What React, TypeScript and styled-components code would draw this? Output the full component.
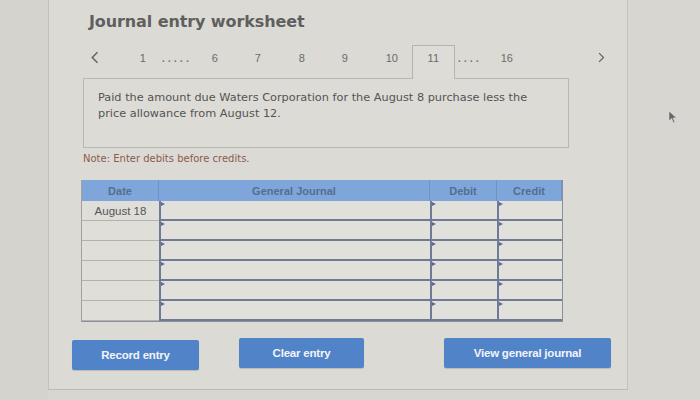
import React from "react"
import styled, { createGlobalStyle } from "styled-components"

const GlobalStyle = createGlobalStyle`
  html, body {
    margin: 0;
    padding: 0;
    background: #d6d4cf;
    font-family: "Liberation Sans", Arial, sans-serif;
  }
`

const Screen = styled.div`
  position: relative;
  width: 700px;
  height: 400px;
  overflow: hidden;
  display: flex;
  background: #d8d6d1;
`

const Gutter = styled.div`
  width: 48px;
  flex-shrink: 0;
  background: #d5d3ce;
`

const Panel = styled.div`
  width: 580px;
  height: 390px;
  box-sizing: border-box;
  background: #dcdad5;
  border-left: 1px solid #c4c2bd;
  border-right: 1px solid #c4c2bd;
  border-bottom: 1px solid #bdbbb6;
  padding: 12px 0 0 32px;
  display: flex;
  flex-direction: column;
`

const Title = styled.h1`
  margin: 0 0 14px 8px;
  height: 19px;
  line-height: 19px;
  font-family: "DejaVu Sans", Verdana, sans-serif;
  font-weight: bold;
  font-size: 16px;
  color: #5f5f5f;
  letter-spacing: -0.1px;
`

const Pager = styled.div`
  display: flex;
  align-items: flex-start;
  height: 33px;
  margin-left: 10px;
  width: 514px;
  font-size: 11px;
  color: #6a6a6a;
`

interface PageProps {
  width: number
  active?: boolean
}

const Page = styled.div<PageProps>`
  width: ${(p) => p.width}px;
  height: 34px;
  box-sizing: border-box;
  display: flex;
  justify-content: center;
  padding-top: 5px;
  line-height: 14px;
  border: 1px solid ${(p) => (p.active ? "#b5b3ae" : "transparent")};
  border-bottom: none;
  background: ${(p) => (p.active ? "#dedcd7" : "transparent")};
  position: relative;
  z-index: 1;
`

const Dots = styled.span`
  letter-spacing: 3px;
  font-weight: bold;
  color: #7a7a7a;
`

const Arrow = styled.div`
  height: 24px;
  display: flex;
  align-items: center;
`

const Spacer = styled.div`
  flex: 1;
`

const Prompt = styled.div`
  width: 486px;
  height: 70px;
  box-sizing: border-box;
  margin-left: 2px;
  border: 1px solid #b9b7b2;
  background: #dddbd6;
  padding: 11px 14px;
  font-family: "DejaVu Sans", Verdana, sans-serif;
  font-size: 11.3px;
  line-height: 16px;
  color: #545454;
`

const Note = styled.div`
  margin: 5px 0 15px 2px;
  height: 12px;
  line-height: 12px;
  font-family: "DejaVu Sans", Verdana, sans-serif;
  font-size: 10px;
  color: #8c5a4c;
`

const Table = styled.div`
  width: 480px;
  display: grid;
  grid-template-columns: 77px 271px 67px 65px;
  border-left: 1px solid #a3a19c;
  border-right: 1px solid #8890a0;
  border-bottom: 1px solid #8890a0;
`

const HeadCell = styled.div`
  height: 21px;
  background: #7ea6da;
  border-right: 1px solid #6f93c6;
  display: flex;
  align-items: center;
  justify-content: center;
  font-weight: bold;
  font-size: 11px;
  color: #566d90;
  &:last-child {
    border-right: none;
  }
`

const DateCell = styled.div`
  height: 20px;
  box-sizing: border-box;
  border-bottom: 1px solid #b3b1ac;
  display: flex;
  align-items: center;
  justify-content: center;
  font-size: 11.5px;
  color: #555;
  background: #e0ded9;
`

const InputCell = styled.div`
  position: relative;
  height: 20px;
  box-sizing: border-box;
  border-left: 2px solid #6f7b96;
  border-bottom: 2px solid #6f7b96;
  background: #e2e0db;
  &::before {
    content: "";
    position: absolute;
    left: 0;
    top: 1px;
    border-left: 4px solid #5a6a92;
    border-top: 2px solid transparent;
    border-bottom: 2px solid transparent;
  }
`

const Buttons = styled.div`
  display: flex;
  align-items: flex-start;
  margin-top: 16px;
  width: 550px;
  margin-left: -9px;
`

interface ButtonProps {
  width: number
  offset?: number
}

const Button = styled.button<ButtonProps>`
  width: ${(p) => p.width}px;
  height: 30px;
  margin-top: ${(p) => p.offset ?? 0}px;
  border: none;
  border-radius: 2px;
  background: #5183c8;
  color: #f2f4f8;
  font-family: "Liberation Sans", Arial, sans-serif;
  font-weight: bold;
  font-size: 11.5px;
  letter-spacing: -0.2px;
  box-shadow: 0 1px 1px rgba(0, 0, 0, 0.15);
`

const Gap = styled.div<{ width: number }>`
  flex-shrink: 0;
  width: ${(p) => p.width}px;
`

const Cursor = styled.svg`
  position: absolute;
  left: 668px;
  top: 110px;
`

const Chevron: React.FC<{ dir: "left" | "right"; size: number }> = ({ dir, size }) => (
  <svg width={size * 0.6} height={size} viewBox="0 0 6 10">
    <path
      d={dir === "left" ? "M5 1 L1 5 L5 9" : "M1 1 L5 5 L1 9"}
      fill="none"
      stroke="#666"
      strokeWidth="1.2"
    />
  </svg>
)

const pages: { label: React.ReactNode; width: number; active?: boolean }[] = [
  { label: "1", width: 22 },
  { label: <Dots>.....</Dots>, width: 46 },
  { label: "6", width: 30 },
  { label: "7", width: 56 },
  { label: "8", width: 32 },
  { label: "9", width: 54 },
  { label: "10", width: 40 },
  { label: "11", width: 43, active: true },
  { label: <Dots>....</Dots>, width: 30 },
  { label: "16", width: 44 },
]

const rows = ["August 18", "", "", "", "", ""]

export default function App() {
  return (
    <>
      <GlobalStyle />
      <Screen>
        <Gutter />
        <Panel>
          <Title>Journal entry worksheet</Title>
          <Pager>
            <Arrow>
              <Chevron dir="left" size={13} />
            </Arrow>
            <Gap width={33} />
            {pages.map((p, i) => (
              <Page key={i} width={p.width} active={p.active}>
                {p.label}
              </Page>
            ))}
            <Spacer />
            <Arrow>
              <Chevron dir="right" size={11} />
            </Arrow>
          </Pager>
          <Prompt>
            Paid the amount due Waters Corporation for the August 8 purchase less the price
            allowance from August 12.
          </Prompt>
          <Note>Note: Enter debits before credits.</Note>
          <Table>
            <HeadCell>Date</HeadCell>
            <HeadCell>General Journal</HeadCell>
            <HeadCell>Debit</HeadCell>
            <HeadCell>Credit</HeadCell>
            {rows.map((d, i) => (
              <React.Fragment key={i}>
                <DateCell>{d}</DateCell>
                <InputCell />
                <InputCell />
                <InputCell />
              </React.Fragment>
            ))}
          </Table>
          <Buttons>
            <Button width={127} offset={2}>Record entry</Button>
            <Gap width={40} />
            <Button width={125}>Clear entry</Button>
            <Gap width={80} />
            <Button width={167}>View general journal</Button>
          </Buttons>
        </Panel>
        <Cursor width="10" height="14" viewBox="0 0 10 14">
          <path d="M1 1 L1 11 L3.5 8.5 L5.5 13 L7 12.3 L5 8 L8.5 8 Z" fill="#666" stroke="#ddd" strokeWidth="0.6" />
        </Cursor>
      </Screen>
    </>
  )
}
